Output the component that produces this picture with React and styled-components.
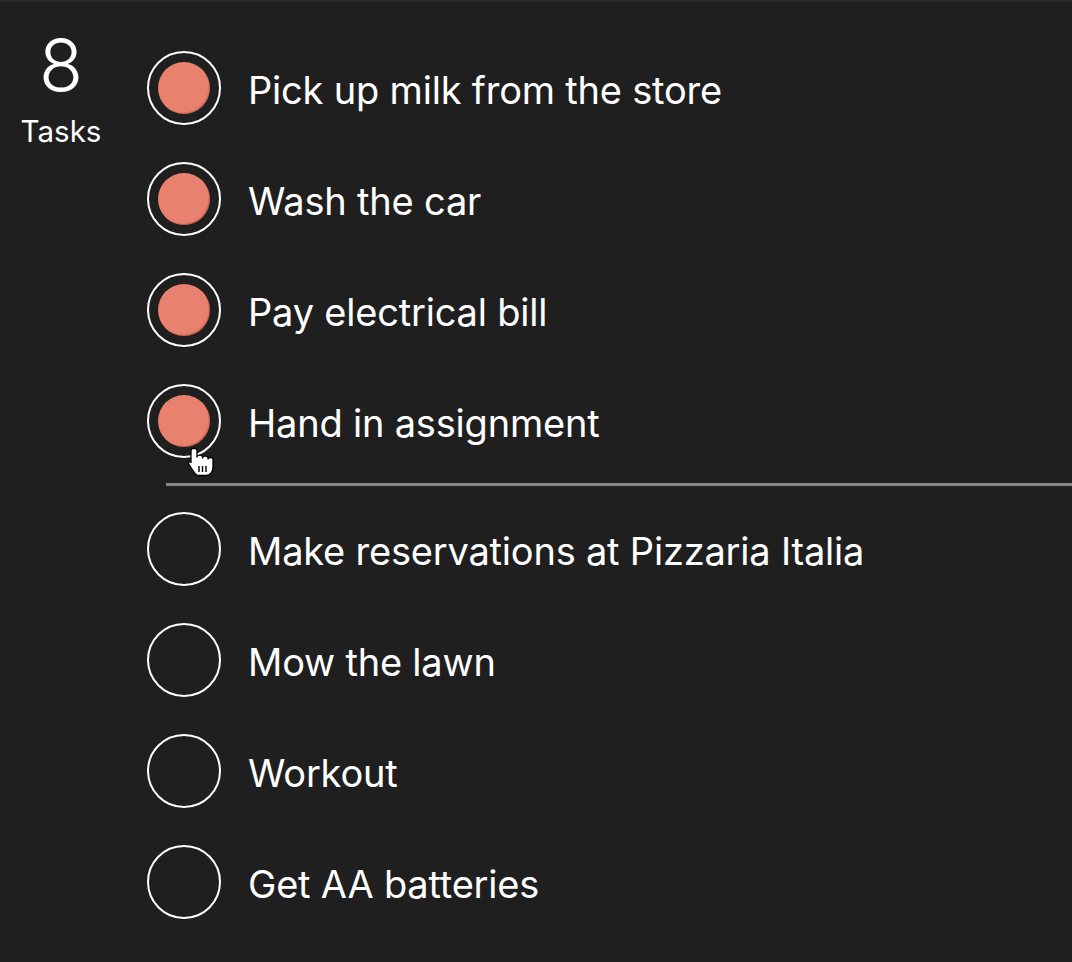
import React from "react";
import styled, { createGlobalStyle } from "styled-components";

const GlobalStyle = createGlobalStyle`
  html, body {
    margin: 0;
    padding: 0;
    background: #1f1f1f;
  }
  body {
    font-family: Inter, "Noto Sans", "Liberation Sans", sans-serif;
    color: #ffffff;
    -webkit-font-smoothing: antialiased;
  }
`;

const Page = styled.div`
  display: flex;
  min-height: 962px;
  box-sizing: border-box;
  background: #1f1f1f;
  border-top: 2px solid #292929;
`;

const Counter = styled.div`
  width: 122px;
  flex: none;
  display: flex;
  flex-flow: column;
  align-items: center;
  padding-top: 27px;
`;

const Count = styled.div`
  font-size: 72px;
  font-weight: 300;
  line-height: 72px;
`;

const CountLabel = styled.div`
  font-size: 29.5px;
  font-weight: 400;
  line-height: 36px;
  margin-top: 12px;
`;

const Lists = styled.div`
  flex: 1;
  display: flex;
  flex-flow: column;
  padding: 49px 0 0 25px;
`;

const TaskList = styled.ul`
  list-style: none;
  margin: 0;
  padding: 0;
  display: flex;
  flex-flow: column;
  gap: 37px;
`;

const Row = styled.li`
  display: flex;
  align-items: center;
  height: 74px;
`;

const Check = styled.div`
  position: relative;
  flex: none;
  width: 74px;
  height: 74px;
  box-sizing: border-box;
  border: 2px solid #ffffff;
  border-radius: 50%;
  display: flex;
  align-items: center;
  justify-content: center;
`;

const Dot = styled.div`
  width: 52px;
  height: 52px;
  border-radius: 50%;
  background: #e8826f;
  box-shadow: inset -1px -1px 1px rgba(120, 20, 10, 0.3);
`;

const Label = styled.span`
  margin-left: 27px;
  padding-top: 4px;
  font-size: 38px;
  font-weight: 400;
  line-height: 48px;
  letter-spacing: -0.2px;
  white-space: nowrap;
`;

const Divider = styled.hr`
  border: none;
  height: 3px;
  background: #868686;
  margin: 25px 0 26px 19px;
`;

const Cursor = styled.svg`
  position: absolute;
  left: 38px;
  top: 61px;
  pointer-events: none;
`;

const done = [
  "Pick up milk from the store",
  "Wash the car",
  "Pay electrical bill",
  "Hand in assignment",
];

const todo = [
  "Make reservations at Pizzaria Italia",
  "Mow the lawn",
  "Workout",
  "Get AA batteries",
];

const HandCursor = () => (
  <Cursor width="30" height="30" viewBox="0 0 30 30">
    <path
      d="M4 3.5C4 0.5 10 0.5 10 3.5V10C10 7.5 15.5 7.5 15.5 10V11C15.5 8.5 21 8.5 21 11V12C21 10 26 10 26 12V20C26 25 23 28.5 19 28.5H12C9.5 28.5 8 27 7 25L2 17.5C0.5 15.5 2.5 13.5 4 15.5Z"
      fill="#ffffff"
      stroke="#000000"
      strokeWidth="1.3"
      strokeLinejoin="round"
    />
    <path
      d="M12 19V25M15.5 19V25M19 19V25"
      stroke="#000000"
      strokeWidth="1.4"
    />
  </Cursor>
);

const App = () => {
  return (
    <>
      <GlobalStyle />
      <Page>
        <Counter>
          <Count>{done.length + todo.length}</Count>
          <CountLabel>Tasks</CountLabel>
        </Counter>

        <Lists>
          <TaskList>
            {done.map((task, i) => (
              <Row key={task}>
                <Check>
                  <Dot />
                  {i === done.length - 1 && <HandCursor />}
                </Check>
                <Label>{task}</Label>
              </Row>
            ))}
          </TaskList>

          <Divider />

          <TaskList>
            {todo.map(task => (
              <Row key={task}>
                <Check />
                <Label>{task}</Label>
              </Row>
            ))}
          </TaskList>
        </Lists>
      </Page>
    </>
  );
};

export default App;
